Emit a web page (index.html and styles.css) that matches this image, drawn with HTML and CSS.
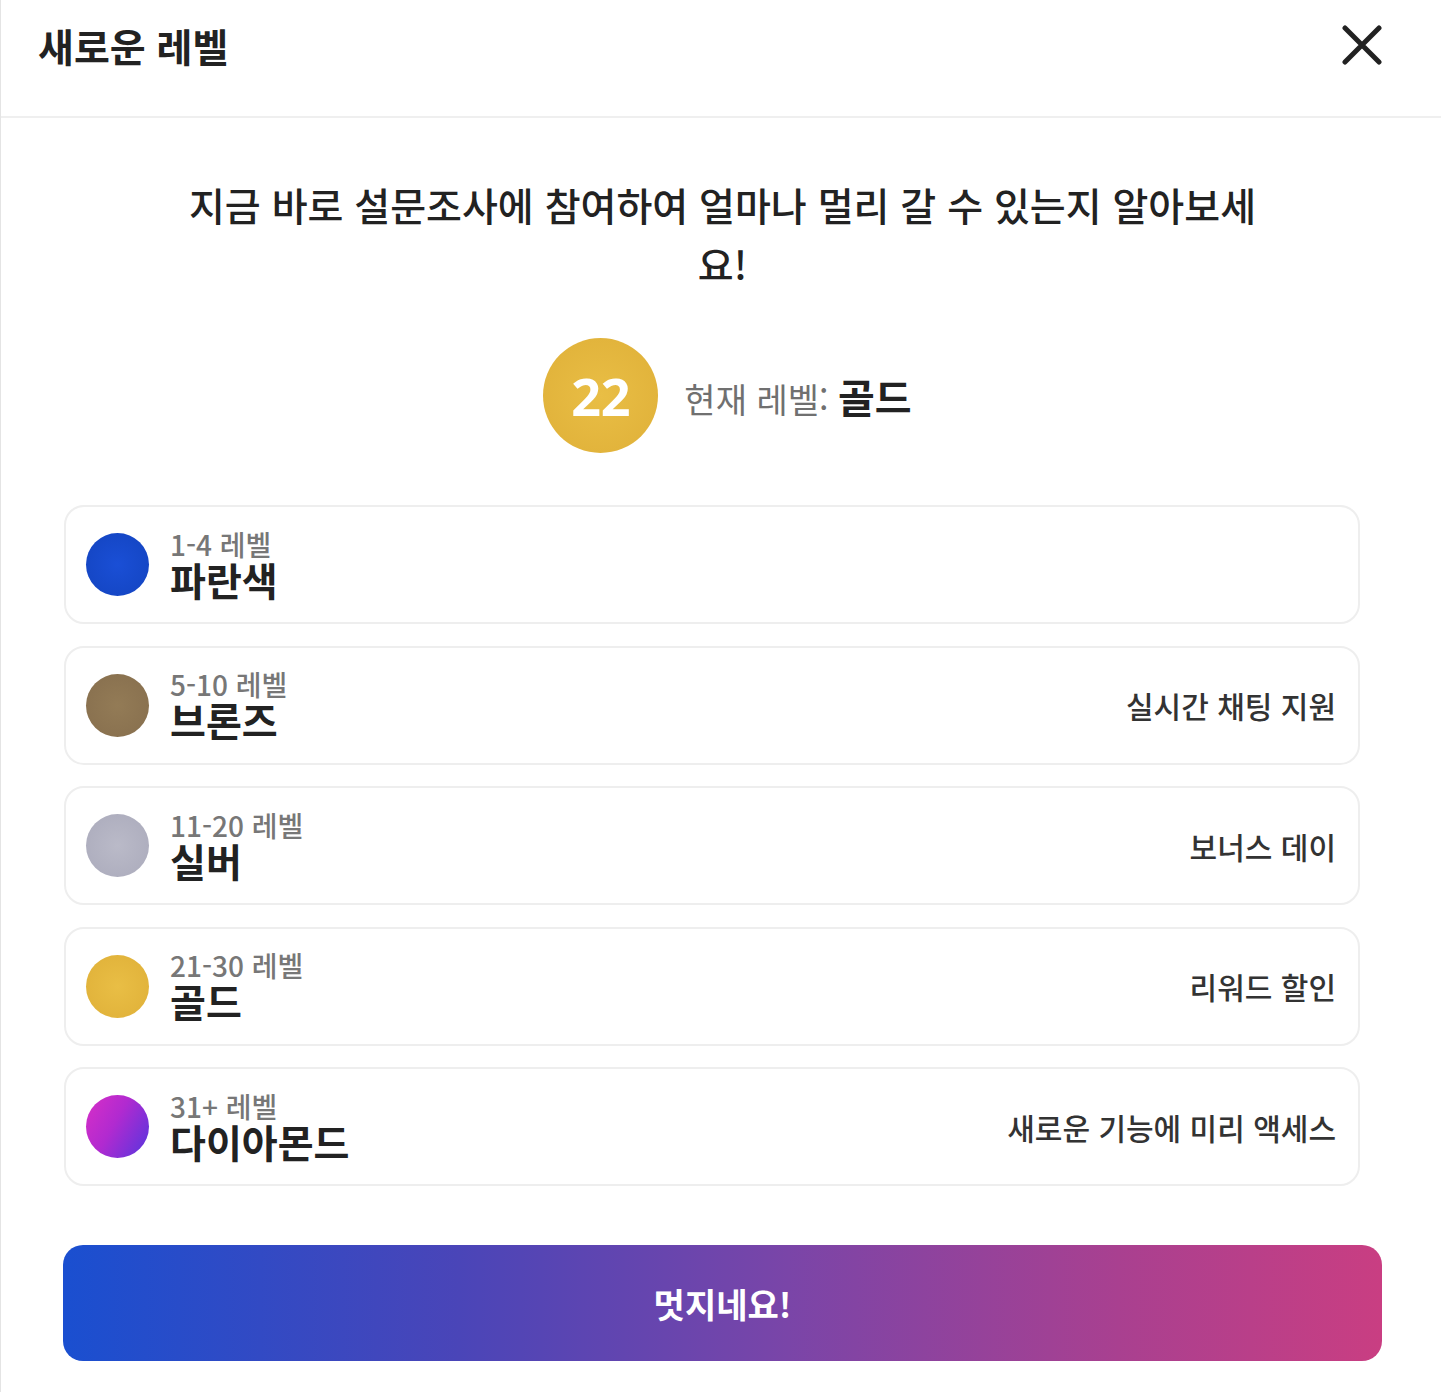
FILE: index.html
```html
<!DOCTYPE html>
<html lang="ko">
<head>
    <meta charset="UTF-8">
    <meta name="viewport" content="width=device-width, initial-scale=1.0">
    <title>새로운 레벨</title>
    <link rel="stylesheet" href="styles.css">
</head>
<body>

<div class="modal">
    <header class="modal-header">
        <h1 class="modal-title">새로운 레벨</h1>
        <button class="close-btn" aria-label="닫기">
            <svg width="40" height="40" viewBox="0 0 40 40">
                <path d="M3 3 L37 37 M37 3 L3 37" stroke="#222" stroke-width="5" stroke-linecap="round" fill="none"/>
            </svg>
        </button>
    </header>

    <div class="modal-body">
        <p class="intro">지금 바로 설문조사에 참여하여 얼마나 멀리 갈 수 있는지 알아보세요!</p>

        <div class="current-level">
            <div class="level-badge">22</div>
            <div class="current-text">현재 레벨: <strong>골드</strong></div>
        </div>

        <ul class="level-list">
            <li class="level-card">
                <span class="dot dot-blue"></span>
                <div class="level-info">
                    <span class="level-range">1-4 레벨</span>
                    <span class="level-name">파란색</span>
                </div>
            </li>
            <li class="level-card">
                <span class="dot dot-bronze"></span>
                <div class="level-info">
                    <span class="level-range">5-10 레벨</span>
                    <span class="level-name">브론즈</span>
                </div>
                <span class="level-perk">실시간 채팅 지원</span>
            </li>
            <li class="level-card">
                <span class="dot dot-silver"></span>
                <div class="level-info">
                    <span class="level-range">11-20 레벨</span>
                    <span class="level-name">실버</span>
                </div>
                <span class="level-perk">보너스 데이</span>
            </li>
            <li class="level-card">
                <span class="dot dot-gold"></span>
                <div class="level-info">
                    <span class="level-range">21-30 레벨</span>
                    <span class="level-name">골드</span>
                </div>
                <span class="level-perk">리워드 할인</span>
            </li>
            <li class="level-card">
                <span class="dot dot-diamond"></span>
                <div class="level-info">
                    <span class="level-range">31+ 레벨</span>
                    <span class="level-name">다이아몬드</span>
                </div>
                <span class="level-perk">새로운 기능에 미리 액세스</span>
            </li>
        </ul>

        <button class="ok-btn">멋지네요!</button>
    </div>
</div>

</body>
</html>
```

FILE: styles.css
```css
body {
    margin: 0;
    padding: 0;
    background-color: #fff;
    font-family: "Noto Sans CJK KR", "Noto Sans", sans-serif;
    color: #222;
}
.modal {
    border-left: 1px solid #e4e4e4;
    min-height: 1392px;
    box-sizing: border-box;
}

/* Cabecera */
.modal-header {
    display: flex;
    justify-content: space-between;
    align-items: center;
    padding: 22px 59px 48px 37px;
    border-bottom: 2px solid #efefef;
}
.modal-title {
    margin: 0;
    font-size: 39px;
    line-height: 46px;
    font-weight: 700;
    color: #222;
}
.close-btn {
    background: none;
    border: none;
    padding: 0;
    width: 40px;
    height: 40px;
    cursor: pointer;
}

.modal-body {
    padding: 0 59px 0 62px;
}
.intro {
    max-width: 1090px;
    margin: 57px auto 0;
    text-align: center;
    font-size: 39px;
    line-height: 59px;
    font-weight: 500;
    color: #222;
}

/* Nivel actual */
.current-level {
    display: flex;
    justify-content: center;
    align-items: center;
    gap: 26px;
    margin-top: 45px;
    padding-left: 10px;
}
.level-badge {
    width: 115px;
    height: 115px;
    border-radius: 50%;
    background: radial-gradient(circle at 50% 50%, #e9be45 0%, #e2b43c 70%, #d6a935 100%);
    color: #fff;
    font-size: 52px;
    font-weight: 700;
    display: flex;
    align-items: center;
    justify-content: center;
    font-family: "Open Sans", "Noto Sans CJK KR", sans-serif;
}
.current-text {
    font-size: 34px;
    color: #707070;
}
.current-text strong {
    font-size: 40px;
    font-weight: 700;
    color: #222;
}

/* Lista de niveles */
.level-list {
    list-style: none;
    margin: 52px 22px 0 1px;
    padding: 0;
    display: flex;
    flex-direction: column;
    gap: 21.5px;
}
.level-card {
    display: flex;
    align-items: center;
    height: 119px;
    box-sizing: border-box;
    border: 2px solid #eeeeee;
    border-radius: 20px;
    padding: 0 22px 0 20px;
}
.dot {
    width: 63px;
    height: 63px;
    border-radius: 50%;
    flex-shrink: 0;
}
.dot-blue {
    background: radial-gradient(circle at 50% 50%, #1a4fd6 0%, #1547c6 70%, #123fb0 100%);
}
.dot-bronze {
    background: radial-gradient(circle at 50% 50%, #937b56 0%, #8a7250 70%, #77613f 100%);
}
.dot-silver {
    background: radial-gradient(circle at 50% 50%, #babac8 0%, #afafbf 70%, #9e9eae 100%);
}
.dot-gold {
    background: radial-gradient(circle at 50% 50%, #e9be45 0%, #e2b43c 70%, #d3a534 100%);
}
.dot-diamond {
    background: linear-gradient(120deg, #d92fc6 0%, #b12ad0 45%, #5436de 100%);
}
.level-info {
    display: flex;
    flex-direction: column;
    margin-left: 21px;
    padding-bottom: 6px;
    flex: 1;
}
.level-range {
    font-size: 28px;
    line-height: 34px;
    color: #777;
    font-weight: 500;
}
.level-name {
    font-size: 39px;
    line-height: 36px;
    font-weight: 700;
    color: #222;
}
.level-perk {
    font-size: 30px;
    font-weight: 500;
    color: #333;
}

/* Boton */
.ok-btn {
    display: block;
    width: 100%;
    height: 116px;
    margin-top: 59px;
    border: none;
    border-radius: 20px;
    background: linear-gradient(90deg, #1a4fd0 0%, #4a45b8 30%, #7a45a8 55%, #a94090 80%, #c93e82 100%);
    color: #fff;
    font-family: "Noto Sans CJK KR", sans-serif;
    font-size: 34px;
    font-weight: 700;
    cursor: pointer;
}
```
